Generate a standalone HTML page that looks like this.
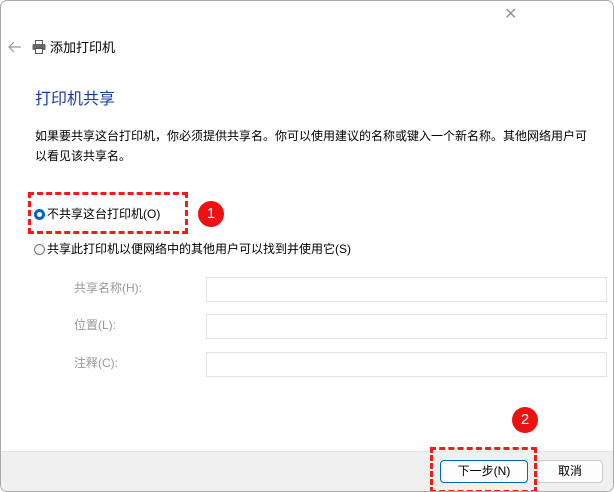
<!DOCTYPE html><html><head><meta charset="utf-8"><style>
*{margin:0;padding:0;box-sizing:border-box}
body{width:614px;height:492px;background:#fff;font-family:"Liberation Sans","Noto Sans CJK SC",sans-serif;font-size:12px;color:#000;position:relative;overflow:hidden}
.win{position:absolute;left:0;top:0;width:614px;height:492px;border:1px solid #aaa;border-radius:7px;background:#fff;overflow:hidden}
.a{position:absolute;white-space:nowrap}
.inp{position:absolute;left:205px;width:401px;height:25px;border:1px solid #e3e3e3;background:#fff}
.lab{position:absolute;left:73px;color:#999;font-size:12px}
.foot{position:absolute;left:0;top:450px;width:614px;height:42px;background:#f0f0f0;border-top:1px solid #e5e5e5}
.btn{position:absolute;top:459px;height:23px;border:1px solid #ccc;border-radius:4px;background:#fdfdfd;text-align:center;line-height:21px;font-size:12px}
.dash{position:absolute;border:3px dashed #f01c1c}
.num{position:absolute;width:26px;height:26px;border-radius:50%;background:#ee1111;color:#fff;text-align:center;line-height:26px;font-size:15px}
.radio{position:absolute;width:11px;height:11px;border-radius:50%}
</style></head><body><div class="win">
<div class="a" style="left:503px;top:3px;color:#999;font-size:16px">✕</div>
<svg class="a" style="left:7px;top:40px" width="14" height="12"><path d="M13 6H2M6 1L1 6l5 5" stroke="#999" stroke-width="1.2" fill="none"/></svg>
<svg class="a" style="left:31px;top:38px" width="14" height="16"><rect x="3.5" y="1.5" width="7" height="4" fill="#fff" stroke="#555"/><rect x="0.5" y="5" width="13" height="6" rx="1" fill="#666"/><rect x="3.5" y="9.5" width="7" height="5" fill="#fff" stroke="#555"/></svg>
<div class="a" style="left:49px;top:36px;font-size:13px">添加打印机</div>
<div class="a" style="left:34px;top:84px;font-size:16px;color:#1a3aa8">打印机共享</div>
<div class="a" style="left:34px;top:125px;line-height:20px">如果要共享这台打印机，你必须提供共享名。你可以使用建议的名称或键入一个新名称。其他网络用户可<br>以看见该共享名。</div>
<div class="radio" style="left:33px;top:208px;background:#0067c0"><div style="position:absolute;left:3px;top:3px;width:5px;height:5px;border-radius:50%;background:#fff"></div></div>
<div class="a" style="left:46px;top:204px">不共享这台打印机(O)</div>
<div class="radio" style="left:33px;top:243px;border:1px solid #777;background:#f5f5f5"></div>
<div class="a" style="left:46px;top:239px">共享此打印机以便网络中的其他用户可以找到并使用它(S)</div>
<div class="lab" style="top:278px">共享名称(H):</div><div class="inp" style="top:276px"></div>
<div class="lab" style="top:315px">位置(L):</div><div class="inp" style="top:313px"></div>
<div class="lab" style="top:353px">注释(C):</div><div class="inp" style="top:351px"></div>
<div class="foot"></div>
<div class="btn" style="left:439px;width:88px;border-color:#0067c0">下一步(N)</div>
<div class="btn" style="left:536px;width:66px">取消</div>
<div class="dash" style="left:27px;top:191px;width:160px;height:42px"></div>
<div class="num" style="left:197px;top:200px">1</div>
<div class="dash" style="left:429px;top:446px;width:107px;height:46px"></div>
<div class="num" style="left:511px;top:406px">2</div>
</div></body></html>
